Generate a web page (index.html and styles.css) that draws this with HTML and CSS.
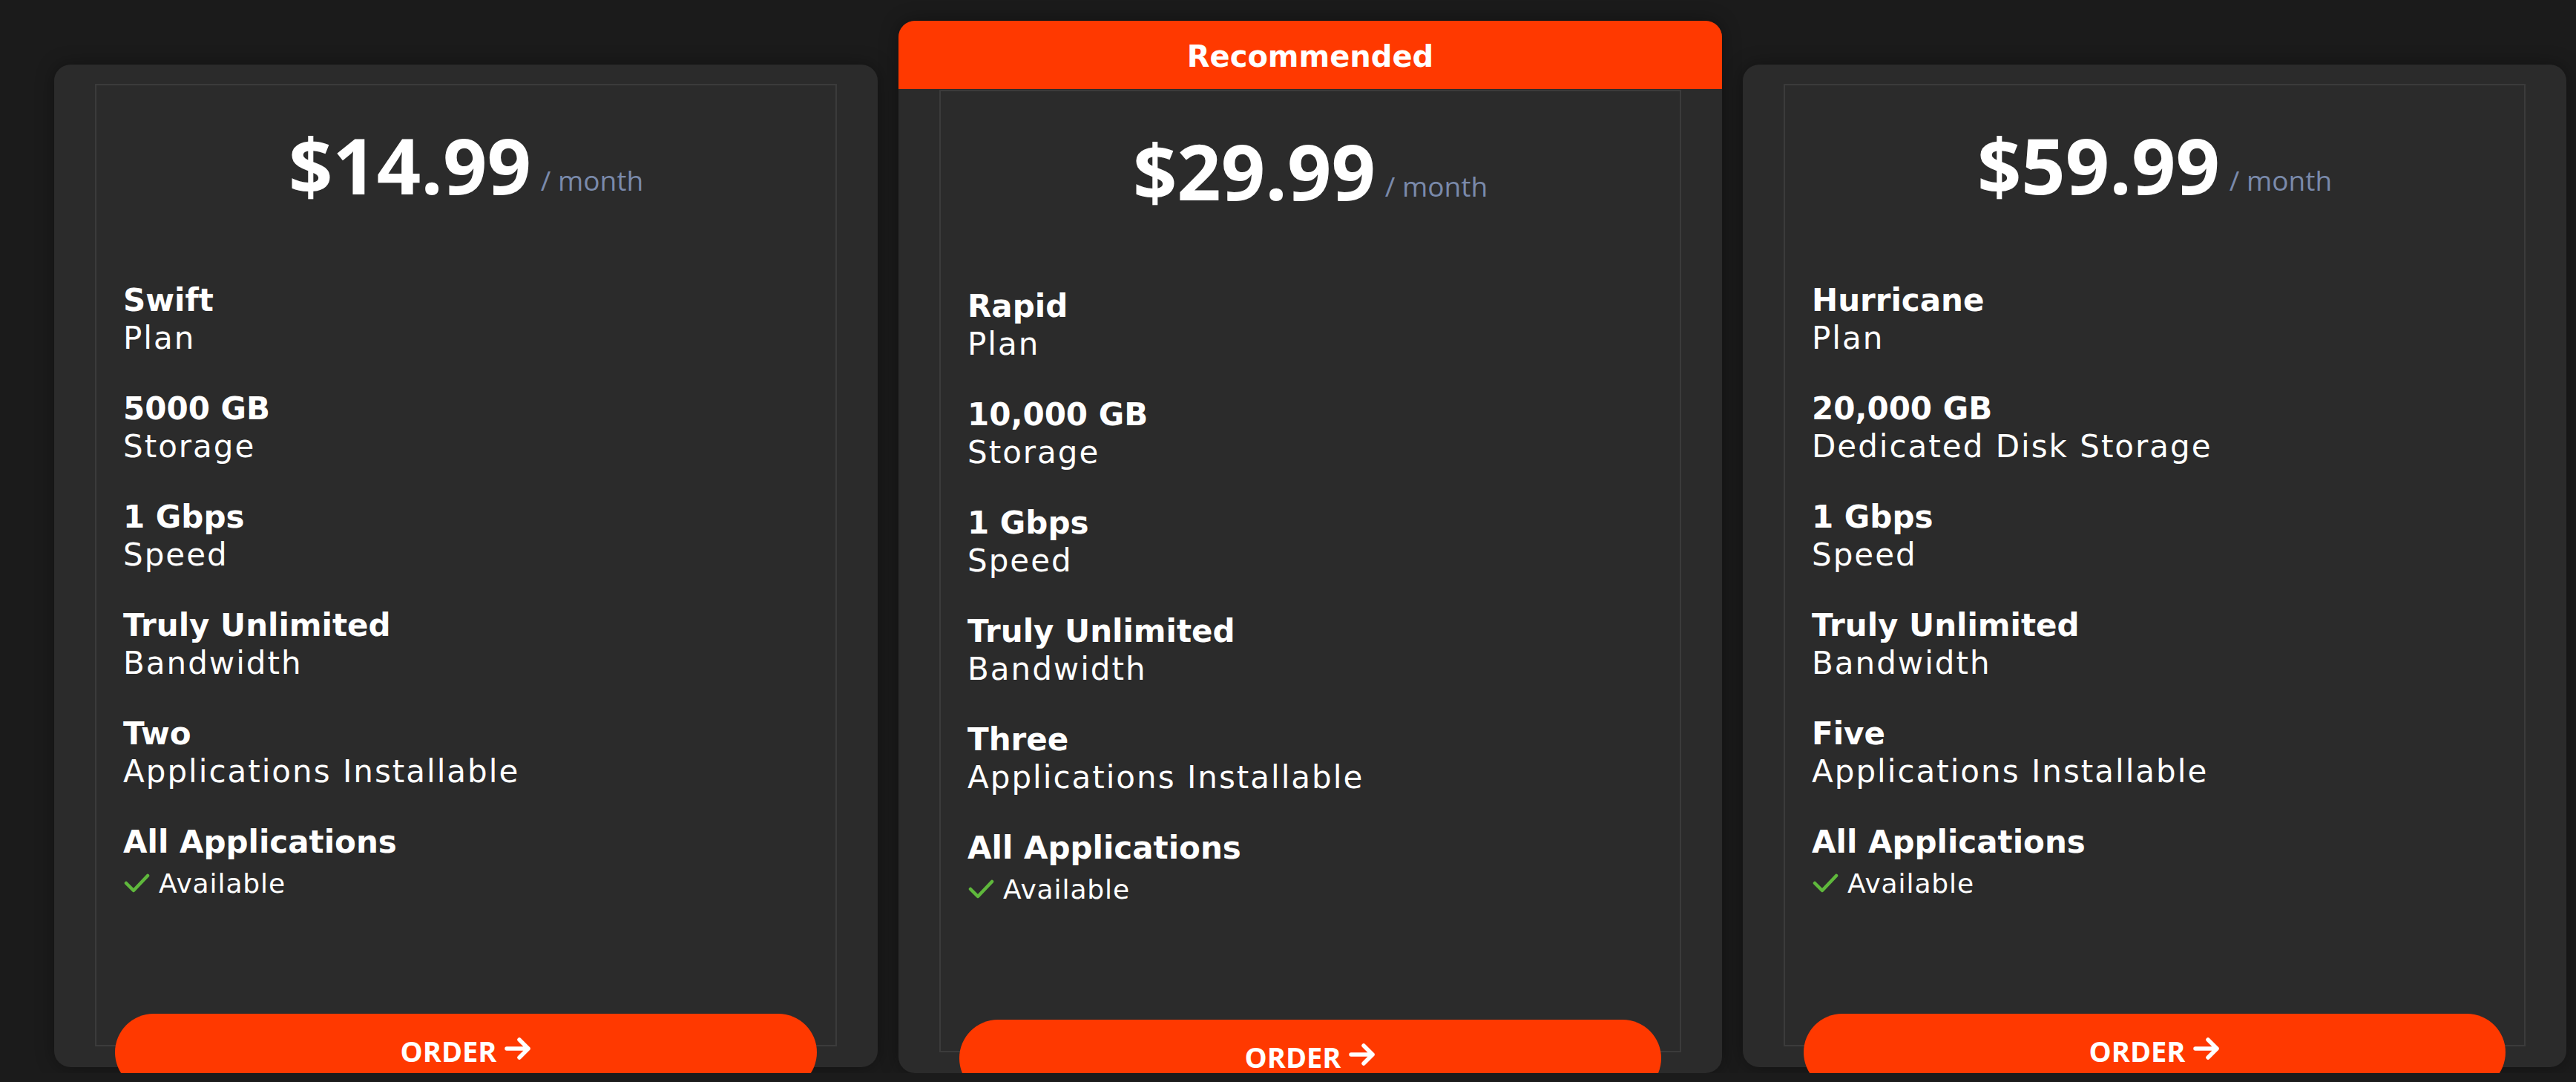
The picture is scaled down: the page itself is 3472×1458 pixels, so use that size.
FILE: index.html
```html
<!DOCTYPE html>
<html lang="en">
<head>
<meta charset="utf-8">
<title>Plans</title>
<link rel="stylesheet" href="styles.css">
</head>
<body>
<div class="plans">
  <div class="plan">
    <div class="plan-body">
      <div class="price"><span class="amount">$14.99</span><span class="per">/ month</span></div>
      <ul class="features">
        <li><span class="f-title">Swift</span><span class="f-text">Plan</span></li>
        <li><span class="f-title">5000 GB</span><span class="f-text">Storage</span></li>
        <li><span class="f-title">1 Gbps</span><span class="f-text">Speed</span></li>
        <li><span class="f-title">Truly Unlimited</span><span class="f-text">Bandwidth</span></li>
        <li><span class="f-title">Two</span><span class="f-text">Applications Installable</span></li>
        <li><span class="f-title">All Applications</span><span class="f-text f-check"><svg class="check" width="36" height="26" viewBox="0 0 36 26"><polyline points="4,13 14,23 33,3" fill="none" stroke="#5fb83c" stroke-width="4.5" stroke-linecap="round" stroke-linejoin="round"/></svg>Available</span></li>
      </ul>
    </div>
    <a class="order" href="#">ORDER<svg class="arrow" width="36" height="32" viewBox="0 0 36 32"><path d="M3 16 H32 M20 4 L32 16 L20 28" fill="none" stroke="#fff" stroke-width="5.5" stroke-linecap="round" stroke-linejoin="round"/></svg></a>
  </div>

  <div class="plan plan-featured">
    <div class="badge">Recommended</div>
    <div class="plan-body">
      <div class="price"><span class="amount">$29.99</span><span class="per">/ month</span></div>
      <ul class="features">
        <li><span class="f-title">Rapid</span><span class="f-text">Plan</span></li>
        <li><span class="f-title">10,000 GB</span><span class="f-text">Storage</span></li>
        <li><span class="f-title">1 Gbps</span><span class="f-text">Speed</span></li>
        <li><span class="f-title">Truly Unlimited</span><span class="f-text">Bandwidth</span></li>
        <li><span class="f-title">Three</span><span class="f-text">Applications Installable</span></li>
        <li><span class="f-title">All Applications</span><span class="f-text f-check"><svg class="check" width="36" height="26" viewBox="0 0 36 26"><polyline points="4,13 14,23 33,3" fill="none" stroke="#5fb83c" stroke-width="4.5" stroke-linecap="round" stroke-linejoin="round"/></svg>Available</span></li>
      </ul>
    </div>
    <a class="order" href="#">ORDER<svg class="arrow" width="36" height="32" viewBox="0 0 36 32"><path d="M3 16 H32 M20 4 L32 16 L20 28" fill="none" stroke="#fff" stroke-width="5.5" stroke-linecap="round" stroke-linejoin="round"/></svg></a>
  </div>

  <div class="plan">
    <div class="plan-body">
      <div class="price"><span class="amount">$59.99</span><span class="per">/ month</span></div>
      <ul class="features">
        <li><span class="f-title">Hurricane</span><span class="f-text">Plan</span></li>
        <li><span class="f-title">20,000 GB</span><span class="f-text">Dedicated Disk Storage</span></li>
        <li><span class="f-title">1 Gbps</span><span class="f-text">Speed</span></li>
        <li><span class="f-title">Truly Unlimited</span><span class="f-text">Bandwidth</span></li>
        <li><span class="f-title">Five</span><span class="f-text">Applications Installable</span></li>
        <li><span class="f-title">All Applications</span><span class="f-text f-check"><svg class="check" width="36" height="26" viewBox="0 0 36 26"><polyline points="4,13 14,23 33,3" fill="none" stroke="#5fb83c" stroke-width="4.5" stroke-linecap="round" stroke-linejoin="round"/></svg>Available</span></li>
      </ul>
    </div>
    <a class="order" href="#">ORDER<svg class="arrow" width="36" height="32" viewBox="0 0 36 32"><path d="M3 16 H32 M20 4 L32 16 L20 28" fill="none" stroke="#fff" stroke-width="5.5" stroke-linecap="round" stroke-linejoin="round"/></svg></a>
  </div>
</div>
</body>
</html>
```

FILE: styles.css
```css
html, body {
  margin: 0;
  padding: 0;
  background: #1b1b1b;
  overflow: hidden;
}

body {
  font-family: "DejaVu Sans", sans-serif;
  color: #fff;
}

.plans {
  display: flex;
  align-items: flex-start;
  gap: 28px;
  padding: 28px 0 0 73px;
}

.plan {
  flex: 0 0 1110px;
  box-sizing: border-box;
  display: flex;
  flex-direction: column;
  margin-top: 59px;
  padding: 26px 55px 0;
  background: #2b2b2b;
  border-radius: 22px;
  box-shadow: 0 0 24px rgba(0, 0, 0, 0.35);
}

.plan-featured {
  margin-top: 0;
  padding-top: 0;
}

.badge {
  height: 92px;
  box-sizing: border-box;
  padding-top: 3px;
  margin: 0 -55px 1px;
  display: flex;
  align-items: center;
  justify-content: center;
  background: #ff3900;
  border-radius: 22px 22px 0 0;
  font-family: "DejaVu Sans", sans-serif;
  font-weight: 700;
  font-size: 40px;
  color: #fff;
}

.plan-body {
  height: 1297px;
  box-sizing: border-box;
  border: 2px solid #3b3b3b;
  padding: 54px 36px 0;
}

.price {
  text-align: center;
  font-family: "Open Sans", sans-serif;
  font-weight: 700;
  font-size: 104px;
  line-height: 105px;
  color: #fff;
  white-space: nowrap;
}

.per {
  font-family: "Open Sans", sans-serif;
  font-weight: 400;
  font-size: 37px;
  line-height: 1;
  color: #7a8aab;
  margin-left: 13px;
  vertical-align: 5px;
}

.features {
  list-style: none;
  margin: 105px 0 0;
  padding: 0;
  font-size: 42px;
  line-height: 51px;
}

.features li + li {
  margin-top: 44px;
}

.f-title {
  display: block;
  font-weight: 700;
}

.f-text {
  display: block;
  letter-spacing: 2px;
}

.f-check {
  margin-top: 5px;
  font-size: 36px;
  letter-spacing: 0.9px;
}

.check {
  margin-right: 12px;
  vertical-align: baseline;
}

.order {
  height: 104px;
  box-sizing: border-box;
  padding-bottom: 5px;
  margin: -44px 27px -32px;
  display: flex;
  align-items: center;
  justify-content: center;
  gap: 11px;
  background: #ff3900;
  border-radius: 52px;
  font-family: "Open Sans", sans-serif;
  font-weight: 700;
  font-size: 38px;
  color: #fff;
  text-decoration: none;
}

.arrow {
  margin-top: -5px;
}
```
